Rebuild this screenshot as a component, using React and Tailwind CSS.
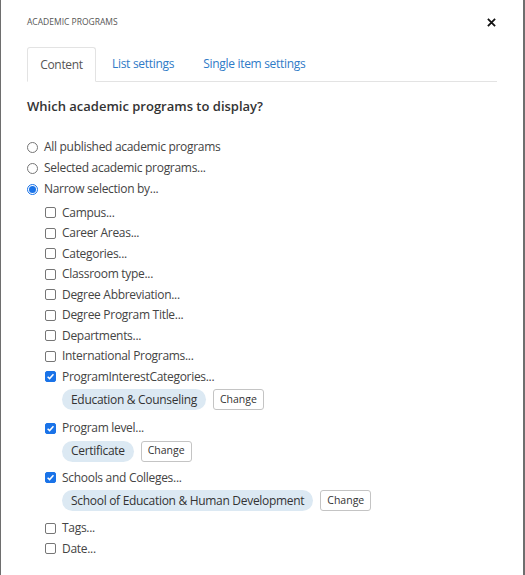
import React from 'react';

const Check = ({ checked }) => (
    <span
        className={
            'flex h-[11px] w-[11px] shrink-0 items-center justify-center rounded-[2px] border ' +
            (checked ? 'border-[#1a73e8] bg-[#1a73e8]' : 'border-[#767676] bg-white')
        }
    >
        {checked && (
            <svg viewBox="0 0 10 10" className="h-[9px] w-[9px]">
                <path d="M1.8 5.2 L4 7.3 L8.3 2.6" fill="none" stroke="white" strokeWidth="1.7" />
            </svg>
        )}
    </span>
);

const Radio = ({ checked }) => (
    <span
        className={
            'flex h-[11px] w-[11px] shrink-0 items-center justify-center rounded-full border ' +
            (checked ? 'border-[#1a73e8]' : 'border-[#767676]')
        }
    >
        {checked && <span className="h-[7px] w-[7px] rounded-full bg-[#1a73e8]" />}
    </span>
);

const Pill = ({ label }) => (
    <div className="ml-[61px] flex items-center gap-[7px]">
        <span className="flex h-[21px] items-center rounded-full bg-[#dce9f3] px-[9px] text-[#333]">
            {label}
        </span>
        <button className="flex h-[21px] items-center rounded-[3px] border border-[#c4c4c4] bg-white px-[6px] text-[10.5px] tracking-normal text-[#333]">
            Change
        </button>
    </div>
);

const CheckRow = ({ label, checked }) => (
    <div className="ml-[44px] flex h-[20.5px] items-center gap-[6px]">
        <Check checked={checked} />
        <span>{label}</span>
    </div>
);

const App = () => {
    return (
        <div className="flex min-h-[575px] bg-[#6e6e6e] pl-[1px] pr-[2px]" style={{ fontFamily: '"Open Sans", sans-serif' }}>
            <div className="w-full bg-white text-[12px] tracking-[-0.3px] text-[#444]">
                <div className="flex items-center justify-between pl-[26px] pr-[26px] pt-[15px]">
                    <span className="text-[8.5px] uppercase leading-[14px] tracking-normal text-[#555]">Academic programs</span>
                    <svg viewBox="0 0 10 10" className="mr-[1px] h-[9px] w-[9px]">
                        <path d="M1 1 L9 9 M9 1 L1 9" stroke="#111" strokeWidth="2" />
                    </svg>
                </div>

                <div className="mx-[26px] mt-[18px] flex h-[35px] border-b border-[#e3e3e3]">
                    <div className="-mb-px flex w-[69px] items-center justify-center rounded-t-[3px] border border-b-white border-[#e3e3e3] bg-white text-[#555]">
                        Content
                    </div>
                    <div className="ml-[16px] flex items-center text-[#2f7bc7]">List settings</div>
                    <div className="ml-[29px] flex items-center text-[#2f7bc7]">Single item settings</div>
                </div>

                <div className="ml-[26px] mt-[15px] text-[13px] font-semibold tracking-normal text-[#333]">
                    Which academic programs to display?
                </div>

                <div className="mt-[20px]">
                    {[
                        ['All published academic programs', false],
                        ['Selected academic programs...', false],
                        ['Narrow selection by...', true],
                    ].map(([label, on]) => (
                        <div key={label} className="ml-[26px] flex h-[21px] items-center gap-[6px]">
                            <Radio checked={on} />
                            <span>{label}</span>
                        </div>
                    ))}
                </div>

                <div className="mt-[3px]">
                    {[
                        'Campus...',
                        'Career Areas...',
                        'Categories...',
                        'Classroom type...',
                        'Degree Abbreviation...',
                        'Degree Program Title...',
                        'Departments...',
                        'International Programs...',
                    ].map((l) => (
                        <CheckRow key={l} label={l} />
                    ))}
                    <CheckRow label="ProgramInterestCategories..." checked />
                    <div className="mt-[2px]"><Pill label="Education & Counseling" /></div>
                    <div className="mt-[8px]"><CheckRow label="Program level..." checked /></div>
                    <div className="mt-[2px]"><Pill label="Certificate" /></div>
                    <div className="mt-[6px]"><CheckRow label="Schools and Colleges..." checked /></div>
                    <div className="mt-[2px]"><Pill label="School of Education & Human Development" /></div>
                    <div className="mt-[7px]"><CheckRow label="Tags..." /></div>
                    <CheckRow label="Date..." />
                </div>
            </div>
        </div>
    );
};

export default App;
